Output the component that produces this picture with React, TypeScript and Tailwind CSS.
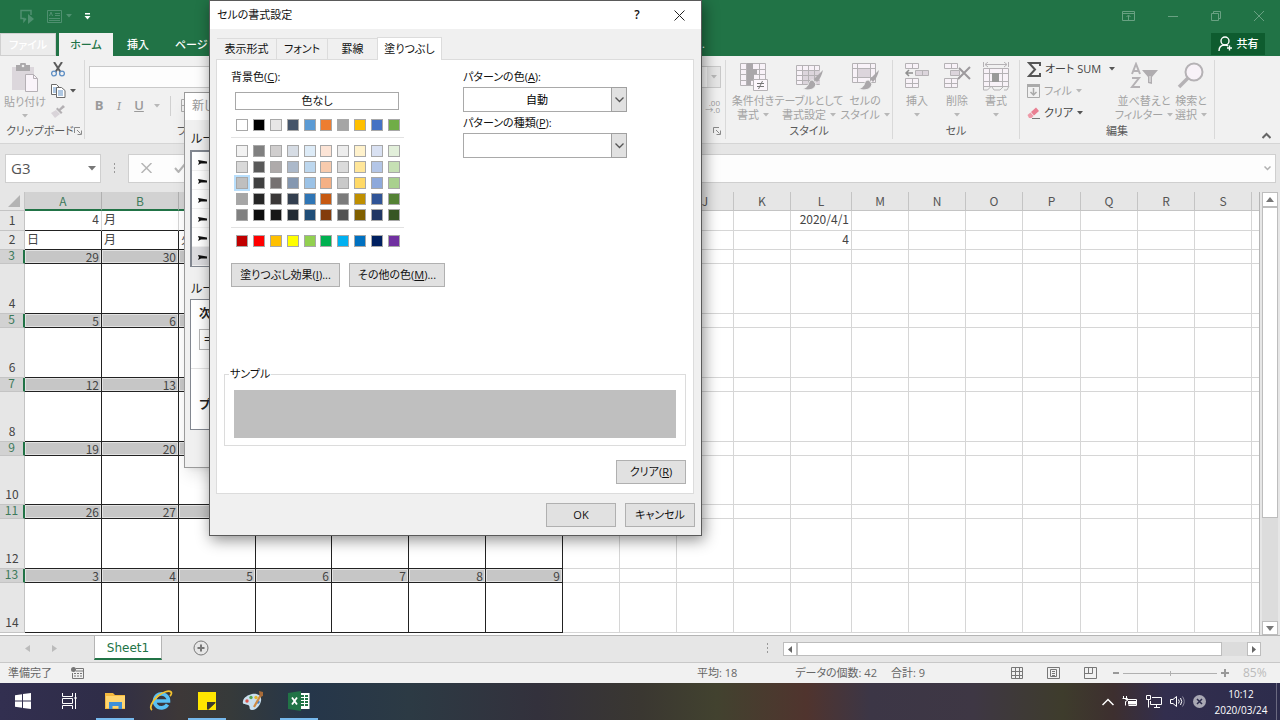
import React, { useState } from 'react';
import clsx from 'clsx';

type CellMap = Record<string, string>;

const COLUMNS = [
    { name: 'A', width: 77 },
    { name: 'B', width: 77 },
    { name: 'C', width: 77 },
    { name: 'D', width: 76 },
    { name: 'E', width: 77 },
    { name: 'F', width: 77 },
    { name: 'G', width: 77 },
    { name: 'H', width: 57 },
    { name: 'I', width: 57 },
    { name: 'J', width: 57 },
    { name: 'K', width: 57 },
    { name: 'L', width: 61 },
    { name: 'M', width: 57 },
    { name: 'N', width: 57 },
    { name: 'O', width: 57 },
    { name: 'P', width: 58 },
    { name: 'Q', width: 57 },
    { name: 'R', width: 57 },
    { name: 'S', width: 57 },
];

const ROW_HEIGHTS = [20, 19, 14, 50, 14, 50, 14, 50, 14, 49, 14, 50, 14, 50];

const WEEKDAYS = ['日', '月', '火', '水', '木', '金', '土'];

const DAYS: Record<number, number[]> = {
    3: [29, 30, 31, 1, 2, 3, 4],
    5: [5, 6, 7, 8, 9, 10, 11],
    7: [12, 13, 14, 15, 16, 17, 18],
    9: [19, 20, 21, 22, 23, 24, 25],
    11: [26, 27, 28, 29, 30, 1, 2],
    13: [3, 4, 5, 6, 7, 8, 9],
};

const buildCells = () => {
    const cells: CellMap = { A1: '4', B1: '月', L1: '2020/4/1', L2: '4' };
    WEEKDAYS.forEach((day, i) => {
        cells[COLUMNS[i].name + '2'] = day;
    });
    Object.entries(DAYS).forEach(([row, days]) => {
        days.forEach((day, i) => {
            cells[COLUMNS[i].name + row] = String(day);
        });
    });
    return cells;
};

const CELLS = buildCells();

const BASE_COLORS = ['#ffffff', '#000000', '#e7e6e6', '#44546a', '#5b9bd5', '#ed7d31', '#a5a5a5', '#ffc000', '#4472c4', '#70ad47'];

const TINTS = [
    ['#f2f2f2', '#808080', '#d0cece', '#d6dce4', '#ddebf7', '#fce4d6', '#ededed', '#fff2cc', '#d9e1f2', '#e2efda'],
    ['#d9d9d9', '#595959', '#aeaaaa', '#acb9ca', '#bdd7ee', '#f8cbad', '#dbdbdb', '#ffe699', '#b4c6e7', '#c6e0b4'],
    ['#bfbfbf', '#404040', '#757171', '#8497b0', '#9bc2e6', '#f4b084', '#c9c9c9', '#ffd966', '#8ea9db', '#a9d08e'],
    ['#a6a6a6', '#262626', '#3a3838', '#333f4f', '#2f75b5', '#c65911', '#7b7b7b', '#bf8f00', '#305496', '#548235'],
    ['#808080', '#0d0d0d', '#161616', '#222b35', '#1f4e78', '#833c0c', '#525252', '#806000', '#203764', '#375623'],
];

const STANDARD_COLORS = ['#c00000', '#ff0000', '#ffc000', '#ffff00', '#92d050', '#00b050', '#00b0f0', '#0070c0', '#002060', '#7030a0'];

/* ---------- small shared bits ---------- */

const Caret = ({ dark = false }: { dark?: boolean }) => (
    <svg width="6" height="4" viewBox="0 0 6 4" className={clsx('shrink-0', dark ? 'text-[#555]' : 'text-[#b8b8b8]')}>
        <path d="M0 0h6L3 3.5z" fill="currentColor" />
    </svg>
);

const Launcher = () => (
    <svg width="8" height="8" viewBox="0 0 8 8" fill="none" stroke="#8a8a8a" className="shrink-0">
        <path d="M0.5 6V0.5H6M3 3l3.5 3.5M7.5 3.5v4h-4" />
    </svg>
);

/* ---------- ribbon icons ---------- */

const PasteIcon = () => (
    <svg width="28" height="30" viewBox="0 0 28 30">
        <path d="M1 4h22v23H1z" fill="#dcd7dc" />
        <path d="M5 2h4a3 3 0 0 1 6 0h4v6H5z" fill="#aaa8aa" />
        <circle cx="12" cy="3" r="1.3" fill="#eee" />
        <path d="M14.5 11.500h8l4 4v13h-12z" fill="#faf4fa" stroke="#b5b0b5" />
        <path d="M22.500 11.500v4h4" fill="none" stroke="#b5b0b5" />
    </svg>
);

const CutIcon = () => (
    <svg width="14" height="15" viewBox="0 0 14 15" fill="none">
        <path d="M3 0l6.500 10M11 0L4.500 10" stroke="#5c5c5c" strokeWidth="2" />
        <circle cx="3" cy="11.500" r="2.400" stroke="#5f8fc4" strokeWidth="1.300" />
        <circle cx="11" cy="11.500" r="2.400" stroke="#5f8fc4" strokeWidth="1.300" />
    </svg>
);

const CopyIcon = () => (
    <svg width="15" height="14" viewBox="0 0 15 14" fill="#fff" stroke="#6b6b6b">
        <path d="M0.500 0.500h5l3 3v7h-8z" />
        <path d="M2 4h4M2 6h4M2 8h4" stroke="#5f8fc4" />
        <path d="M5.500 3.500h5l3.500 3v7H5.500z" />
        <path d="M7 7h5M7 9h5M7 11h5" stroke="#5f8fc4" />
    </svg>
);

const BrushIcon = () => (
    <svg width="14" height="13" viewBox="0 0 14 13">
        <path d="M0 8l5-3 4 4-5 4z" fill="#d9d4d9" />
        <path d="M5 4l5 5 1.500-1.500-2-2L14 2 12 0 8 4 6.500 2.500z" fill="#b3b0b3" />
    </svg>
);

const ConditionalIcon = () => (
    <svg width="29" height="30" viewBox="0 0 29 30">
        <path d="M1.500 1.500h25v22h-25z" fill="#f8f2f8" stroke="#b5b2b5" />
        <path d="M1.500 7.500h25M1.500 12.500h25M1.500 18.500h25M7.500 1v22M20.500 1v22" stroke="#b5b2b5" fill="none" />
        <path d="M8 1h6v6H8zM8 7h10v5H8zM8 12h7v6H8zM8 18h4v5H8z" fill="#aaa7aa" />
        <path d="M14.500 17.500h14v11h-14z" fill="#fcf7fc" stroke="#b5b2b5" />
        <path d="M18 21.500h7M18 24.500h7M23.500 19l-4 8" stroke="#777" fill="none" />
    </svg>
);

const PaintBrush = () => (
    <>
        <path d="M28 8l-9 9 3 3c3-3 5-7 6-12z" fill="#aaa7aa" />
        <path d="M18 18c-4 0-4 3-5 5-1 2-3 3-5 4 5 2 12 1 13-5z" fill="#aaa7aa" stroke="#f0f0f0" />
    </>
);

const TableFormatIcon = () => (
    <svg width="29" height="30" viewBox="0 0 29 30">
        <path d="M1.500 3.500h23v19h-23z" fill="#f8f2f8" stroke="#b5b2b5" />
        <path d="M7 8h18v14H7z" fill="#dcd5dc" />
        <path d="M1.500 8.500h23M1.500 13.500h23M1.500 18.500h23M7.500 3v19M13.500 3v19M19.500 3v19" stroke="#b5b2b5" fill="none" />
        <PaintBrush />
    </svg>
);

const CellStyleIcon = () => (
    <svg width="29" height="30" viewBox="0 0 29 30">
        <path d="M1.500 1.500h23v19h-23z" fill="#f8f2f8" stroke="#b5b2b5" />
        <path d="M1.500 6.500h23M1.500 15.500h23M6.500 1v19M19.500 1v19" stroke="#b5b2b5" fill="none" />
        <path d="M7 7h12v8H7z" fill="#dcd5dc" />
        <PaintBrush />
    </svg>
);

const InsertIcon = () => (
    <svg width="26" height="28" viewBox="0 0 26 28" fill="#f8f2f8" stroke="#b5b2b5">
        <path d="M1.500 1.500h13v5h-13zM8.500 1.500v5M1.500 16.500h13v9h-13zM1.500 21.500h13M8.500 16.500v9" />
        <path d="M11.500 8.500h13v5h-13zM18.500 8.500v5" fill="#dcd5dc" />
        <path d="M9 11H2M5 8l-3 3 3 3" fill="none" stroke="#8f8f8f" strokeWidth="1.500" />
    </svg>
);

const DeleteIcon = () => (
    <svg width="28" height="28" viewBox="0 0 28 28" fill="#f8f2f8" stroke="#b5b2b5">
        <path d="M1.500 1.500h13v5h-13zM8.500 1.500v5M1.500 16.500h13v9h-13zM1.500 21.500h13M8.500 16.500v9" />
        <path d="M7.500 8.500h9v5h-9z" fill="#dcd5dc" />
        <path d="M16 6l11 11M27 5L15 17" fill="none" stroke="#9d9a9d" strokeWidth="2" />
    </svg>
);

const FormatIcon = () => (
    <svg width="28" height="30" viewBox="0 0 28 30" fill="none" stroke="#b5b2b5">
        <path d="M1.500 0v5M26.500 0v5M3 2.500h22M6 0L3 2.500 6 5M22 0l3 2.500L22 5" />
        <path d="M1.500 6.500h25v18h-25z" fill="#f8f2f8" />
        <path d="M1.500 11.500h25M1.500 19.500h25M7.500 6v18M20.500 6v18" />
        <path d="M10 11h7v9h-7z" fill="#999" stroke="none" />
        <path d="M1.500 24v4h4l3-3M10 25l2 3h6l3-3M22 28h3l2-4" />
    </svg>
);

const SortIcon = () => (
    <svg width="28" height="28" viewBox="0 0 28 28" fill="none">
        <path d="M2 12L6 2l4 10M3.500 9h5M2 16h7l-7 9h8" stroke="#b5b2b5" strokeWidth="2" />
        <path d="M12 8h16l-6 7v7l-4-1v-6z" fill="#b0adb0" />
        <path d="M20 14v6" stroke="#f0f0f0" />
    </svg>
);

const FindIcon = () => (
    <svg width="28" height="28" viewBox="0 0 28 28" fill="none">
        <circle cx="17" cy="10" r="8.500" fill="#f8f2f8" stroke="#b5b2b5" strokeWidth="2" />
        <path d="M11 16l-9 9" stroke="#b5b2b5" strokeWidth="3.500" />
    </svg>
);

const BigButton = ({ icon, lines, className }: { icon: React.ReactNode; lines: string[]; className?: string }) => (
    <button className={clsx('flex flex-col items-center whitespace-nowrap text-[11px] leading-[14px] text-[#a3a3a3]', className)}>
        <span className="flex h-8 items-start justify-center">{icon}</span>
        <span>{lines[0]}</span>
        <span className="flex h-[14px] items-center gap-1">
            {lines[1]}
            <Caret />
        </span>
    </button>
);

const Group = ({ label, className, children }: { label: string; className?: string; children: React.ReactNode }) => (
    <section className={clsx('my-1 flex flex-col border-r border-[#d9d9d9]', className)}>
        <div className="flex h-[68px] items-start">{children}</div>
        <div className="text-center text-[11px] leading-4 text-[#5a5a5a]">{label}</div>
    </section>
);

/* ---------- window chrome ---------- */

const TitleBar = () => (
    <header className="flex h-8 shrink-0 items-center justify-between bg-[#217346] text-[#69a182]">
        <div className="flex items-center gap-3 pl-5">
            <svg width="15" height="15" viewBox="0 0 15 15" fill="none" stroke="#4f9070">
                <path d="M6 9.500L4 12V9.500H1V1.500h10V6" strokeWidth="1.500" />
                <path d="M8 5l6 5-6 5z" fill="#4f9070" stroke="none" />
            </svg>
            <div className="flex items-center gap-1">
                <svg width="15" height="13" viewBox="0 0 15 13" fill="none" stroke="#4f9070">
                    <path d="M0.500 0.500h14v12H0.500zM2.500 6l1.500-4 1.500 4M8 3.500h5M8 5.500h5M2 8.500h11M2 10.500h11" />
                </svg>
                <svg width="6" height="4" viewBox="0 0 6 4"><path d="M0 0h6L3 3.500z" fill="#4f9070" /></svg>
            </div>
            <svg width="7" height="7" viewBox="0 0 7 7"><path d="M1 0h5v1.500H1zM0.500 3h6l-3 3.500z" fill="#fff" /></svg>
        </div>
        <div className="flex items-center gap-[33px] pr-4">
            <svg width="13" height="10" viewBox="0 0 13 10" fill="none" stroke="currentColor">
                <path d="M0.500 0.500h12v9H0.500zM0.500 2.500h12M6.500 9V4.500M4.500 6l2-2 2 2" />
            </svg>
            <svg width="10" height="10" viewBox="0 0 10 10" stroke="currentColor"><path d="M0 5.500h10" /></svg>
            <svg width="10" height="10" viewBox="0 0 10 10" fill="none" stroke="currentColor">
                <path d="M0.500 2.500h7v7h-7zM2.500 2V0.500h7v7H8" />
            </svg>
            <svg width="10" height="10" viewBox="0 0 10 10" stroke="currentColor"><path d="M0 0l10 10M10 0L0 10" /></svg>
        </div>
    </header>
);

const RibbonTabs = () => (
    <nav className="flex h-6 shrink-0 items-end bg-[#217346] text-[11px] leading-[22px] font-medium whitespace-nowrap text-white">
        <button className="h-[23px] w-14 border border-[#d0d0d0] bg-[#ececec] leading-5">ファイル</button>
        <button className="ml-[3px] h-[23px] w-[54px] bg-[#f1f1f1] text-[#217346]">ホーム</button>
        <button className="h-[23px] w-[50px]">挿入</button>
        <button className="h-[23px] pl-3">ページ レイアウト</button>
        <span className="mr-[506px] ml-auto h-[23px]">操作アシスト...</span>
        <button className="mr-[15px] mb-px flex h-[22px] w-[54px] items-center justify-center gap-1 bg-[#0e5c2f]">
            <svg width="15" height="16" viewBox="0 0 15 16" fill="none" stroke="#fff" strokeWidth="1.400">
                <circle cx="7" cy="5" r="4" />
                <path d="M1 15c0-4 2-6 6-6 1.500 0 2.500 0.500 3 1M11.500 9.500v5M9 12h5" />
            </svg>
            共有
        </button>
    </nav>
);

const Ribbon = () => (
    <div className="flex h-[88px] shrink-0 border-b border-[#d5d5d5] bg-[#f1f1f1]">
        <section className="my-1 flex w-[85px] flex-col border-r border-[#d9d9d9]">
            <div className="flex h-[68px] gap-1 pl-1">
                <BigButton icon={<PasteIcon />} lines={['貼り付け', '']} className="w-[42px] pt-[3px]" />
                <div className="flex flex-col gap-[7px] pt-[2px] pl-px">
                    <button aria-label="切り取り"><CutIcon /></button>
                    <button aria-label="コピー" className="flex items-center gap-1">
                        <CopyIcon />
                        <Caret dark />
                    </button>
                    <button aria-label="書式のコピー"><BrushIcon /></button>
                </div>
            </div>
            <div className="flex items-center justify-between pr-[3px] pl-[6px] text-[11px] leading-4 whitespace-nowrap text-[#5a5a5a]">
                クリップボード
                <Launcher />
            </div>
        </section>

        {/* font, alignment and number share whatever width is left */}
        <section className="my-1 flex min-w-0 flex-1 flex-col border-r border-[#d9d9d9] pr-1 pl-1">
            <div className="flex items-center justify-between pt-[6px]">
                <input aria-label="フォント名" className="h-[22px] w-[150px] border border-[#c9c9c9] bg-[#fdfdfd]" />
                <div className="flex h-[22px] w-20 items-center justify-end border border-[#c9c9c9] bg-[#fdfdfd]">
                    <span className="flex h-5 w-[13px] items-center justify-center bg-[#e6e6e6]"><Caret /></span>
                </div>
            </div>
            <div className="flex h-9 items-center justify-between pl-[5px] text-[13px] text-[#9a9a9a]">
                <div className="flex items-center gap-[10px]">
                    <button className="w-[10px] font-bold">B</button>
                    <button className="w-[10px] font-serif italic">I</button>
                    <button className="w-[10px] font-semibold underline">U</button>
                    <Caret />
                    <span className="h-5 w-px bg-[#d0d0d0]" />
                    <svg width="13" height="13" viewBox="0 0 13 13" fill="none" stroke="#aaa">
                        <path d="M0.500 0.500h12v12H0.500zM6.500 0v13M0 6.500h13" />
                    </svg>
                </div>
                <div className="pr-px text-right text-[8px] leading-[7px]">
                    <div>.00</div>
                    <div>→.0</div>
                </div>
            </div>
            <div className="mt-auto flex items-center justify-between pl-[88px] text-[11px] leading-4 text-[#5a5a5a]">
                フォント
                <Launcher />
            </div>
        </section>

        <Group label="スタイル" className="w-[167px]">
            <BigButton icon={<ConditionalIcon />} lines={['条件付き', '書式']} className="w-[54px] pt-[2px]" />
            <BigButton icon={<TableFormatIcon />} lines={['テーブルとして', '書式設定']} className="w-[58px] pt-[2px]" />
            <BigButton icon={<CellStyleIcon />} lines={['セルの', 'スタイル']} className="w-[54px] pt-[2px]" />
        </Group>
        <Group label="セル" className="w-[127px]">
            <BigButton icon={<InsertIcon />} lines={['挿入', '']} className="w-12 pt-[2px]" />
            <BigButton icon={<DeleteIcon />} lines={['削除', '']} className="w-8 pt-[2px]" />
            <BigButton icon={<FormatIcon />} lines={['書式', '']} className="w-[46px] pt-[2px]" />
        </Group>
        <Group label="編集" className="w-[195px]">
            <div className="flex w-[97px] flex-col gap-1 pl-[7px] text-[11px] leading-[18px] whitespace-nowrap text-[#444]">
                <button className="flex items-center gap-1">
                    <svg width="14" height="15" viewBox="0 0 14 15" fill="none" stroke="#555" strokeWidth="2" className="shrink-0">
                        <path d="M13 4V1H2l6 6.500L2 14h11v-3" />
                    </svg>
                    オート SUM
                    <span className="ml-1"><Caret dark /></span>
                </button>
                <button className="flex items-center gap-1 text-[#a3a3a3]">
                    <svg width="13" height="14" viewBox="0 0 13 14" fill="none" stroke="#aaa">
                        <path d="M0.500 0.500h12v13H0.500z" />
                        <path d="M0 1.500h13" strokeWidth="3" />
                        <path d="M6.500 4v7M3.500 8l3 3 3-3" strokeWidth="1.500" />
                    </svg>
                    フィル
                    <Caret />
                </button>
                <button className="flex items-center gap-1">
                    <svg width="13" height="12" viewBox="0 0 13 12">
                        <path d="M4 5l5-4.500L12 4 7 8.500z" fill="#e97f92" />
                        <path d="M0.500 8L3.500 5.500 6.500 9l-2 2H2z" fill="#ee9aa8" />
                        <path d="M5 11.500h8" stroke="#777" />
                    </svg>
                    クリア
                    <Caret dark />
                </button>
            </div>
            <BigButton icon={<SortIcon />} lines={['並べ替えと', 'フィルター']} className="w-[54px] pt-[2px]" />
            <BigButton icon={<FindIcon />} lines={['検索と', '選択']} className="w-10 pt-[2px]" />
        </Group>
        <div className="flex w-[65px] items-end justify-end pr-[9px] pb-1">
            <svg width="9" height="7" viewBox="0 0 9 7" fill="none" stroke="#666" strokeWidth="2"><path d="M0.500 6l4-4 4 4" /></svg>
        </div>
    </div>
);

const FormulaBar = () => (
    <div className="flex h-12 shrink-0 items-center gap-[10px] bg-[#e6e6e6] pr-1 pl-[5px]">
        <div className="flex h-[29px] w-24 items-center border border-[#cfcfcf] bg-white pr-1">
            <input aria-label="名前ボックス" defaultValue="G3" className="w-full min-w-0 pl-[5px] text-[15px] text-[#555] outline-none" />
            <svg width="8" height="5" viewBox="0 0 8 5" className="shrink-0"><path d="M0 0h8L4 4.500z" fill="#777" /></svg>
        </div>
        <svg width="7" height="12" viewBox="0 0 7 12"><path d="M3 1h1v2H3zM3 5h1v2H3zM3 9h1v2H3z" fill="#999" /></svg>
        <div className="flex h-[29px] flex-1 items-center border border-[#cfcfcf] bg-[#fdfdfd] pr-1 pl-3">
            <svg width="11" height="10" viewBox="0 0 11 10" stroke="#b5b5b5" strokeWidth="1.500"><path d="M0.500 0l10 10M10.500 0l-10 10" /></svg>
            <svg width="12" height="10" viewBox="0 0 12 10" fill="none" stroke="#b5b5b5" strokeWidth="2" className="ml-[22px]">
                <path d="M1 5l3.500 4L11 1" />
            </svg>
            <input aria-label="数式バー" className="ml-16 min-w-0 flex-1 outline-none" />
            <svg width="7" height="5" viewBox="0 0 7 5" fill="none" stroke="#b0b0b0" strokeWidth="1.500"><path d="M0.500 0.500l3 3 3-3" /></svg>
        </div>
    </div>
);

/* ---------- sheet ---------- */

const cellClass = (rowNo: number, colNo: number) => {
    const inCalendar = colNo < 7;
    const dateRow = inCalendar && rowNo > 2 && rowNo % 2 === 1;
    const right = inCalendar && rowNo > 1 ? 'border-r-[#222]' : 'border-r-[#d6d6d6]';
    const bottom = inCalendar ? 'border-b-[#222]' : 'border-b-[#d6d6d6]';
    return clsx(
        'border-r border-b p-0 text-xs leading-3 text-[#444]',
        right,
        bottom,
        rowNo < 3 && 'pb-[3px]',
        dateRow && 'bg-[#c6c6c6] shadow-[inset_0_0_0_1px_#e2e2e2]'
    );
};

const SheetGrid = () => (
    <div className="min-w-0 flex-1 overflow-hidden border-r border-[#b5b5b5] bg-white font-['Noto_Sans_CJK_JP',sans-serif]">
        <table className="w-full table-fixed border-separate border-spacing-0">
            <colgroup>
                <col style={{ width: 25 }} />
                {COLUMNS.map((c) => <col key={c.name} style={{ width: c.width }} />)}
                <col />
            </colgroup>
            <thead>
                <tr className="h-[19px]">
                    <th className="border-r border-b border-[#c4c4c4] bg-[#e6e6e6] p-0">
                        <svg width="12" height="12" viewBox="0 0 12 12" className="ml-2"><path d="M12 0v12H0z" fill="#b3b3b3" /></svg>
                    </th>
                    {COLUMNS.map((c, i) => (
                        <th
                            key={c.name}
                            className={clsx(
                                'border-r p-0 text-xs leading-4 font-normal',
                                i < 7
                                    ? 'border-b-2 border-r-[#b0b0b0] border-b-[#217346] bg-[#d2d2d2] text-[#3e7a5b]'
                                    : 'border-b border-[#c4c4c4] bg-[#e6e6e6] text-[#555]'
                            )}
                        >
                            {c.name}
                        </th>
                    ))}
                    <th className="border-b border-[#c4c4c4] bg-[#e6e6e6]" />
                </tr>
            </thead>
            <tbody>
                {ROW_HEIGHTS.map((height, r) => {
                    const rowNo = r + 1;
                    const selected = rowNo > 2 && rowNo % 2 === 1;
                    return (
                        <tr key={rowNo} style={{ height }}>
                            <th
                                className={clsx(
                                    'border-b border-[#c4c4c4] p-0 text-xs font-normal',
                                    selected
                                        ? 'border-r-2 border-r-[#217346] bg-[#d2d2d2] align-top leading-[9px] text-[#3e7a5b]'
                                        : 'border-r bg-[#e6e6e6] pb-1 align-bottom leading-3 text-[#444]'
                                )}
                            >
                                {rowNo}
                            </th>
                            {COLUMNS.map((c, i) => {
                                const value = CELLS[c.name + rowNo] ?? '';
                                const numeric = /^\d/.test(value);
                                return (
                                    <td key={c.name} className={cellClass(rowNo, i)}>
                                        <div className={clsx(numeric ? 'pr-[2px] text-right' : 'pl-[2px]')}>{value}</div>
                                    </td>
                                );
                            })}
                            <td className="border-b border-[#d6d6d6] p-0" />
                        </tr>
                    );
                })}
            </tbody>
        </table>
    </div>
);

const VerticalScroll = () => (
    <div className="flex w-5 shrink-0 flex-col items-center bg-[#e6e6e6]">
        <div className="flex w-4 flex-1 flex-col bg-[#dcdcdc]">
            <button aria-label="上へ" className="flex h-[15px] items-center justify-center border border-[#bdbdbd] bg-white">
                <svg width="8" height="5" viewBox="0 0 8 5"><path d="M0 5h8L4 0z" fill="#777" /></svg>
            </button>
            <div className="h-[311px] border border-[#bdbdbd] bg-white" />
            <button aria-label="下へ" className="mt-auto flex h-[14px] items-center justify-center border border-[#bdbdbd] bg-white">
                <svg width="8" height="5" viewBox="0 0 8 5"><path d="M0 0h8L4 5z" fill="#777" /></svg>
            </button>
        </div>
    </div>
);

const SheetTabs = () => (
    <div className="flex h-[27px] shrink-0 items-start border-t border-[#b5b5b5] bg-[#e6e6e6]">
        <div className="flex h-6 w-[94px] items-center gap-[22px] pl-[25px]">
            <svg width="5" height="7" viewBox="0 0 5 7"><path d="M5 0v7L0 3.500z" fill="#bbb" /></svg>
            <svg width="5" height="7" viewBox="0 0 5 7"><path d="M0 0v7l5-3.500z" fill="#bbb" /></svg>
        </div>
        <button className="h-6 w-[68px] border-x border-b-2 border-x-[#b5b5b5] border-b-[#217346] bg-white font-['DejaVu_Sans',sans-serif] text-xs leading-6 text-[#217346]">
            Sheet1
        </button>
        <button aria-label="新しいシート" className="ml-[31px] pt-1">
            <svg width="16" height="16" viewBox="0 0 16 16" fill="none" stroke="#777">
                <circle cx="8" cy="8" r="7" />
                <path d="M8 4.500v7M4.500 8h7" strokeWidth="2" />
            </svg>
        </button>
        <svg width="4" height="12" viewBox="0 0 4 12" className="mt-[6px] ml-auto"><path d="M1 1h1v2H1zM1 5h1v2H1zM1 9h1v2H1z" fill="#999" /></svg>
        <div className="mt-[6px] mr-[19px] ml-[13px] flex h-[14px] w-[478px] justify-between bg-[#dcdcdc]">
            <button aria-label="左へ" className="flex w-[14px] items-center justify-center border border-[#bdbdbd] bg-white">
                <svg width="4" height="7" viewBox="0 0 4 7"><path d="M4 0v7L0 3.500z" fill="#666" /></svg>
            </button>
            <div className="mr-[25px] flex-1 border border-[#bdbdbd] bg-white" />
            <button aria-label="右へ" className="flex w-[14px] items-center justify-center border border-[#bdbdbd] bg-white">
                <svg width="4" height="7" viewBox="0 0 4 7"><path d="M0 0v7l4-3.500z" fill="#666" /></svg>
            </button>
        </div>
    </div>
);

const StatusBar = () => (
    <footer className="flex h-[21px] shrink-0 items-center border-t border-[#c8c8c8] bg-[#f1f1f1] pr-3 pl-2 text-[11px] leading-4 text-[#666]">
        <span>準備完了</span>
        <svg width="13" height="12" viewBox="0 0 13 12" fill="none" stroke="#777" className="ml-[19px]">
            <path d="M5 1.500h7.500v10h-11V6M5 4h7M3 6.500h2M6 6.500h2M9 6.500h2M3 9h2M6 9h2M9 9h2" />
            <circle cx="2.500" cy="2.500" r="2.500" fill="#777" stroke="none" />
        </svg>
        <span className="ml-auto">平均: 18</span>
        <span className="ml-[58px]">データの個数: 42</span>
        <span className="ml-[14px]">合計: 9</span>
        <div className="ml-[86px] flex gap-6">
            <svg width="12" height="12" viewBox="0 0 12 12" fill="none" stroke="#777"><path d="M0.500 0.500h11v11h-11zM0 4.500h12M0 8.500h12M4.500 0v12M8.500 0v12" /></svg>
            <svg width="13" height="12" viewBox="0 0 13 12" fill="none" stroke="#777"><path d="M0.500 0.500h12v11h-12zM3.500 2.500h6v7h-6zM5 4.500h3M5 6.500h3M5 8.500h3" /></svg>
            <svg width="13" height="12" viewBox="0 0 13 12" fill="none" stroke="#777"><path d="M0.500 0.500h12v11h-12zM4.500 0v6.500M8.500 0v6.500H0" /></svg>
        </div>
        <div className="ml-4 flex items-center gap-1">
            <svg width="6" height="8" viewBox="0 0 6 8"><path d="M0 3h6v2H0z" fill="#999" /></svg>
            <svg width="94" height="8" viewBox="0 0 94 8" stroke="#b0b0b0"><path d="M0 4.500h94M47.500 2v5" /></svg>
            <svg width="8" height="8" viewBox="0 0 8 8" stroke="#999" strokeWidth="2"><path d="M0 4h8M4 0v8" /></svg>
        </div>
        <span className="ml-[14px] w-[25px] text-xs leading-4 text-[#bbb]">85%</span>
    </footer>
);

/* ---------- taskbar ---------- */

const TaskButton = ({ label, running = false, children }: { label: string; running?: boolean; children: React.ReactNode }) => (
    <button aria-label={label} className="flex h-full w-[46px] flex-col items-center">
        <span className="flex h-[35px] items-center">{children}</span>
        {running && <span className="h-[2px] w-[38px] bg-[#76b9ed]" />}
    </button>
);

const Taskbar = () => (
    <div className="flex h-[37px] shrink-0 items-center bg-[linear-gradient(90deg,#322f50_0%,#2f2d48_8%,#3d3838_14%,#363a3a_18%,#25364a_24%,#2c3a44_32%,#33313c_42%,#3a3731_50%,#42422f_56%,#50342e_63%,#3c3646_68%,#3e3744_76%,#3e3c2c_83%,#3d2f2f_87%,#322e4e_91%,#2d2c4c_100%)] text-white">
        <TaskButton label="スタート">
            <svg width="16" height="16" viewBox="0 0 16 16" fill="#fff"><path d="M0 2.300l7-1v6.300H0zM8 1.100L16 0v7.600H8zM0 8.500h7v6.300l-7-1zM8 8.500h8V16l-8-1.100z" /></svg>
        </TaskButton>
        <TaskButton label="タスク ビュー">
            <svg width="15" height="16" viewBox="0 0 15 16" fill="none" stroke="#fff"><path d="M0.500 0v3.500h10V0M0.500 5.500h10v5h-10zM0.500 16v-3.500h10V16M13.500 0v16M12 5h3" /></svg>
        </TaskButton>
        <TaskButton label="エクスプローラー" running>
            <svg width="20" height="18" viewBox="0 0 20 18">
                <path d="M0 1h8l2 2h10v14H0z" fill="#f5b93e" />
                <path d="M1 4h19v12H1z" fill="#ffd56f" />
                <path d="M4 17v-7h13v7h-3.500v-3h-6v3z" fill="#3f8fd8" />
            </svg>
        </TaskButton>
        <TaskButton label="Internet Explorer">
            <svg width="24" height="22" viewBox="0 0 24 22" fill="none">
                <path d="M18.500 14.500a7 7 0 1 1 1-3.500H7" stroke="#59c0f3" strokeWidth="3.600" />
                <path d="M3 20C0 18 3 11 9 6c5-4 11-6 13-4 1 1 0 3-1 4" stroke="#f3c22f" strokeWidth="1.800" />
            </svg>
        </TaskButton>
        <TaskButton label="付箋" running>
            <svg width="18" height="18" viewBox="0 0 18 18">
                <path d="M0 0h18v18H0z" fill="#ffe600" />
                <path d="M9 18v-8h9z" fill="#3b3a2e" />
                <path d="M10 11h8l-8 7z" fill="#3b3a2e" />
                <path d="M18 10.500V18h-7.500z" fill="#ffe600" />
            </svg>
        </TaskButton>
        <TaskButton label="ペイント">
            <svg width="22" height="22" viewBox="0 0 22 22">
                <path d="M10 4c6-1 10 2 9 7s-5 9-9 9c-4 0-1-4-4-5s-6 0-5-4 5-6 9-7z" fill="#c9dfee" />
                <circle cx="5" cy="11" r="1.700" fill="#d9534a" />
                <circle cx="9" cy="7.500" r="1.700" fill="#4fa452" />
                <circle cx="14" cy="7.500" r="1.700" fill="#e4b52d" />
                <circle cx="16" cy="12" r="1.700" fill="#3d7fd0" />
                <path d="M20 3l-8 14" stroke="#d08a42" strokeWidth="2.200" />
                <path d="M17 1l4 1v4l-3 1z" fill="#a86b38" />
            </svg>
        </TaskButton>
        <TaskButton label="Excel" running>
            <svg width="22" height="20" viewBox="0 0 22 20">
                <path d="M11 2h10.500v16H11z" fill="#fff" />
                <path d="M13 4h3v2h-3zM17 4h3v2h-3zM13 7h3v2h-3zM17 7h3v2h-3zM13 10h3v2h-3zM17 10h3v2h-3zM13 13h3v2h-3zM17 13h3v2h-3z" fill="#217346" />
                <path d="M0 2l13-2v20L0 18z" fill="#217346" />
                <path d="M4 6.500l5 7M9 6.500l-5 7" stroke="#fff" strokeWidth="1.800" />
            </svg>
        </TaskButton>
        <div className="ml-auto flex items-center gap-2">
            <svg width="12" height="8" viewBox="0 0 12 8" fill="none" stroke="#fff" strokeWidth="1.500"><path d="M0.500 7L6 1.500 11.500 7" /></svg>
            <svg width="16" height="12" viewBox="0 0 16 12" fill="none" stroke="#fff">
                <path d="M3.500 3.500h11v6h-8M1.500 0v2.500M4.500 0v2.500M0.500 2.500h5v2l-2 1v4" />
                <path d="M6 5h8v3.500H6z" fill="#fff" stroke="none" />
            </svg>
            <svg width="16" height="13" viewBox="0 0 16 13" fill="none" stroke="#fff"><path d="M6 2.500h9.500v7h-11V6M0.500 0.500h4v4h-4zM2.500 4.500v8M8 12.500h6M10.500 10v2.500" /></svg>
            <svg width="15" height="13" viewBox="0 0 15 13" fill="none" stroke="#fff"><path d="M0.500 4.500h2.500l3.500-3v10l-3.500-3H0.500zM8.500 4.500q1.500 2 0 4M10.500 3q2.500 3.500 0 7" /><path d="M12.500 1.500q3.500 5 0 10" stroke="#8a889c" /></svg>
            <svg width="13" height="13" viewBox="0 0 13 13"><circle cx="6.500" cy="6.500" r="6.500" fill="#a9a8b4" /><path d="M4 4l5 5M9 4L4 9" stroke="#2d2c4c" strokeWidth="1.500" /></svg>
        </div>
        <div className="mx-[6px] w-[58px] text-center text-[10px] leading-4">
            <div>10:12</div>
            <div className="whitespace-nowrap">2020/03/24</div>
        </div>
        <div className="mr-[3px] h-full w-px bg-[#6a6980]" />
    </div>
);

/* ---------- dialogs ---------- */

const RuleDialog = () => (
    <section className="absolute top-[92px] left-[184px] flex h-[376px] w-[470px] flex-col border border-[#9a9a9a] bg-[#f0f0f0] text-xs text-[#222] shadow-lg">
        <h2 className="h-[27px] bg-white pl-[7px] leading-[26px] text-[#999]">新しい書式ルール</h2>
        <div className="flex flex-1 flex-col px-[5px]">
            <p className="mt-[11px] pl-px leading-4">ルールの種類を選択してください(S):</p>
            <ul className="mt-[3px] h-[117px] border-2 border-[#828790] bg-white">
                {[0, 1, 2, 3, 4, 5].map((i) => (
                    <li key={i} className={clsx('h-[19px] border-b border-[#f0f0f0] pl-[6px] text-[10px] leading-[18px]', i === 5 && 'bg-[#dcdcdf]')}>
                        <svg width="9" height="5" viewBox="0 0 9 5" className="inline"><path d="M0 0l3 0.500 6 1v2H3L0 5l1-2.500z" fill="#111" /></svg>
                    </li>
                ))}
            </ul>
            <p className="mt-[14px] pl-px leading-4">ルールの内容を編集してください(E):</p>
            <div className="mt-[2px] flex h-[131px] flex-col border border-[#828790] bg-white">
                <label htmlFor="rule-formula" className="mt-[6px] pl-2 leading-4 font-bold">次の数式を満たす場合に値を書式設定(O):</label>
                <input id="rule-formula" defaultValue="=" className="mx-2 mt-[7px] h-[21px] border border-[#b5b5b5] pl-1" />
                <div className="mt-[18px] h-px bg-[#e2e2e2]" />
                <p className="mt-7 pl-2 leading-4 font-bold">プレビュー:</p>
            </div>
        </div>
    </section>
);

const SwatchRow = ({ colors, picked, onPick }: { colors: string[]; picked: string; onPick: (c: string) => void }) => (
    <div className="flex h-4 w-[168px] items-center justify-between">
        {colors.map((color) => (
            <span
                key={color}
                className={clsx('flex size-4 items-center justify-center', picked === color && 'bg-[#b9dffc]')}
            >
                <button
                    aria-label={color}
                    onClick={() => onPick(color)}
                    className="size-3 border border-[#a8a8a8]"
                    style={{ backgroundColor: color }}
                />
            </span>
        ))}
    </div>
);

const SelectBox = ({ id, options }: { id: string; options: string[] }) => (
    <div className="relative h-[25px] w-[164px]">
        <select id={id} className="h-full w-full appearance-none border border-[#a9a9a9] bg-white pr-4 text-center text-[11px] text-black">
            {options.map((o) => <option key={o}>{o}</option>)}
        </select>
        <span className="pointer-events-none absolute inset-y-0 right-0 flex w-4 items-center justify-center border border-[#a0a0a0] bg-[#e1e1e1]">
            <svg width="9" height="6" viewBox="0 0 9 6" fill="none" stroke="#555" strokeWidth="1.300"><path d="M0.500 0.500l4 4 4-4" /></svg>
        </span>
    </div>
);

const DialogButton = ({ className, children }: { className?: string; children: React.ReactNode }) => (
    <button className={clsx('h-6 shrink-0 border border-[#b0b0b0] bg-[#e1e1e1] whitespace-nowrap', className)}>{children}</button>
);

const FormatDialog = () => {
    const [picked, setPicked] = useState('#bfbfbf');

    return (
        <section className="absolute top-0 left-[209px] flex h-[536px] w-[493px] flex-col border border-[#5a5a5a] bg-[#f0f0f0] text-[11px] leading-4 text-[#111] shadow-[2px_4px_14px_rgba(0,0,0,0.45)]">
            <div className="flex h-7 shrink-0 items-center bg-white pr-4 pl-[7px]">
                <h1 className="flex-1">セルの書式設定</h1>
                <button className="w-4 text-xs font-semibold">?</button>
                <button aria-label="閉じる" className="ml-[29px]">
                    <svg width="11" height="11" viewBox="0 0 11 11" stroke="#222"><path d="M0.500 0.500l10 10M10.500 0.500l-10 10" /></svg>
                </button>
            </div>

            <div role="tablist" className="mt-2 flex h-[22px] shrink-0 items-end pl-[7px]">
                <button role="tab" className="h-[21px] w-[60px] border-t border-r border-[#dcdcdc]">表示形式</button>
                <button role="tab" className="h-[21px] w-[51px] border-t border-r border-[#dcdcdc]">フォント</button>
                <button role="tab" className="h-[21px] w-[49px] border-t border-[#dcdcdc]">罫線</button>
                <button role="tab" aria-selected="true" className="relative z-10 -mb-px h-[23px] w-[65px] border border-b-0 border-[#dcdcdc] bg-white">塗りつぶし</button>
            </div>

            <div className="mx-[6px] mr-[7px] flex h-[435px] shrink-0 flex-col border border-[#dcdcdc] bg-white px-[7px]">
                <div className="flex pl-[7px]">
                    <div className="flex w-[232px] flex-col pt-[9px]">
                        <p>背景色(<u>C</u>):</p>
                        <button className="mt-[7px] ml-1 h-[18px] w-[164px] border border-[#a8a8a8] leading-4">色なし</button>
                        <div className="mt-[7px] ml-[3px]">
                            <SwatchRow colors={BASE_COLORS} picked={picked} onPick={setPicked} />
                        </div>
                        <hr className="mt-1 w-[173px] border-[#e2e2e2]" />
                        <div className="mt-[5px] ml-[3px]">
                            {TINTS.map((row) => <SwatchRow key={row[0]} colors={row} picked={picked} onPick={setPicked} />)}
                        </div>
                        <hr className="mt-1 w-[173px] border-[#e2e2e2]" />
                        <div className="mt-[5px] ml-[3px]">
                            <SwatchRow colors={STANDARD_COLORS} picked={picked} onPick={setPicked} />
                        </div>
                        <div className="mt-[14px] flex gap-[9px]">
                            <DialogButton className="w-[109px]">塗りつぶし効果(<u>I</u>)...</DialogButton>
                            <DialogButton className="w-24">その他の色(<u>M</u>)...</DialogButton>
                        </div>
                    </div>
                    <div className="flex flex-col pt-[9px]">
                        <label htmlFor="pattern-color" className="mb-[2px]">パターンの色(<u>A</u>):</label>
                        <SelectBox id="pattern-color" options={['自動']} />
                        <label htmlFor="pattern-type" className="mt-[3px] mb-[2px]">パターンの種類(<u>P</u>):</label>
                        <SelectBox id="pattern-type" options={['']} />
                    </div>
                </div>

                <fieldset className="mt-[79px] h-20 border border-[#dcdcdc] px-[9px]">
                    <legend className="-ml-[5px] px-px">サンプル</legend>
                    <div className="mt-2 h-12" style={{ backgroundColor: picked }} />
                </fieldset>
                <DialogButton className="mt-[14px] w-[70px] self-end">クリア(<u>R</u>)</DialogButton>
            </div>

            <div className="flex justify-end gap-[9px] pt-[9px] pr-[6px]">
                <DialogButton className="w-[70px]">OK</DialogButton>
                <DialogButton className="w-[70px]">キャンセル</DialogButton>
            </div>
        </section>
    );
};

export default function App() {
    return (
        <main className="relative flex h-screen flex-col overflow-hidden bg-[#e6e6e6] font-['Open_Sans','Noto_Sans_CJK_JP',sans-serif] [font-feature-settings:'palt']">
            <TitleBar />
            <RibbonTabs />
            <Ribbon />
            <FormulaBar />
            <div className="flex min-h-0 flex-1">
                <SheetGrid />
                <VerticalScroll />
            </div>
            <SheetTabs />
            <StatusBar />
            <Taskbar />
            <RuleDialog />
            <FormatDialog />
        </main>
    );
}
